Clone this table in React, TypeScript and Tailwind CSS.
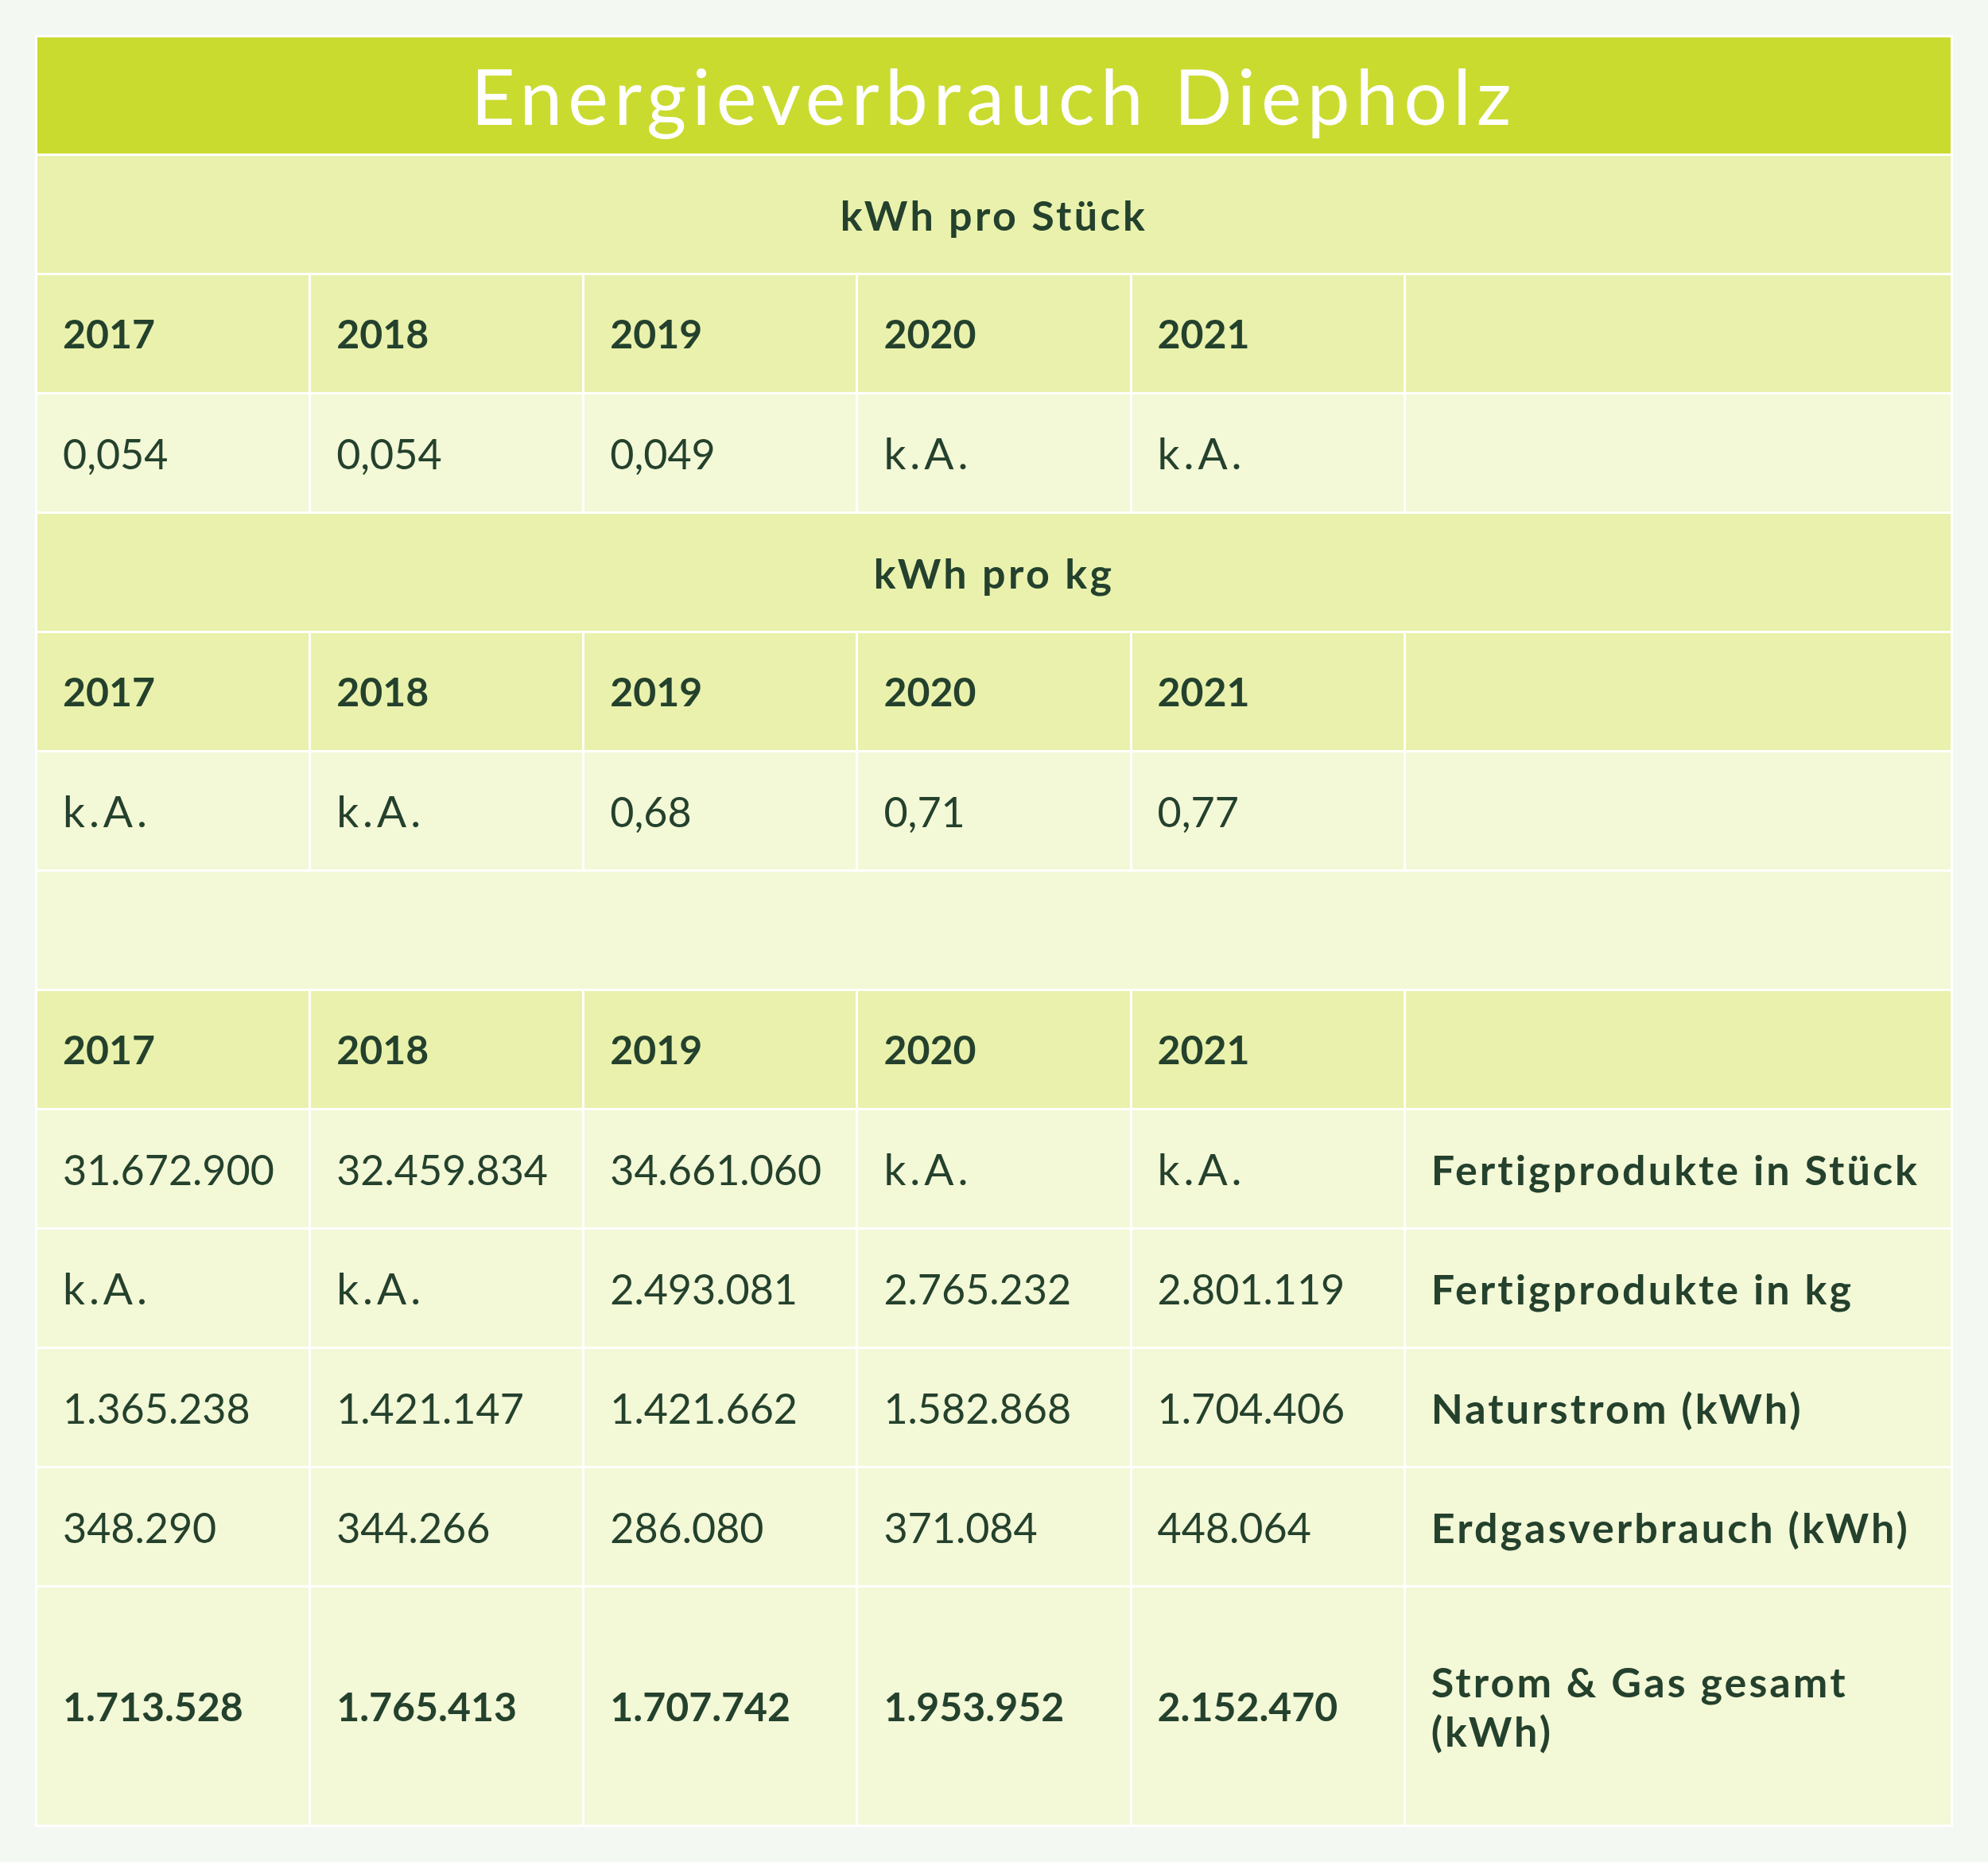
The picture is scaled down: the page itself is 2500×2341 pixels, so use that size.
import React from 'react';

// Energieverbrauch table, 7 grid units wide; the label column spans two units

const years = ['2017', '2018', '2019', '2020', '2021'];

function SectionHeader({ title }: { title: string }) {
  return (
    <div className="col-span-7 flex h-[147px] items-center justify-center bg-[#e9f1ac] text-[52px] font-bold tracking-[0.065em]">
      {title}
    </div>
  );
}

function YearRow() {
  return (
    <>
      {years.map((y) => (
        <div key={y} className="flex h-[147px] items-center bg-[#e9f1ac] pl-[32px] text-[50px] font-bold">
          {y}
        </div>
      ))}
      <div className="col-span-2 h-[147px] bg-[#e9f1ac]" />
    </>
  );
}

interface DataRowProps {
  values: string[];
  label?: string;
  bold?: boolean;
  tall?: boolean;
}

function DataRow({ values, label, bold, tall }: DataRowProps) {
  const h = tall ? 'h-[298px]' : 'h-[147px]';
  return (
    <>
      {values.map((v, i) => (
        <div
          key={i}
          className={`flex ${h} items-center bg-[#f3f8d6] pl-[32px] ${bold ? 'text-[50px] font-bold' : 'text-[52px] font-normal'} ${v === 'k.A.' ? 'text-[55px] tracking-[0.09em]' : ''}`}
        >
          {v}
        </div>
      ))}
      <div className={`col-span-2 flex ${h} items-center bg-[#f3f8d6] pl-[32px] pr-[30px] text-[52px] font-bold leading-[62px] tracking-[0.06em]`}>
        {label}
      </div>
    </>
  );
}

export default function App() {
  return (
    <div className="min-h-screen bg-[#f4f8f3] pt-[44px] pb-[44px]">
      <div className="mx-auto grid w-[2412px] grid-cols-7 gap-[3px] bg-white p-[3px] font-['Lato',sans-serif] text-[#24412d]">
        {/* Title */}
        <div className="col-span-7 flex h-[146px] items-center justify-center bg-[#cadb30] text-[96px] tracking-[0.075em] text-white">
          Energieverbrauch Diepholz
        </div>

        {/* kWh pro Stück */}
        <SectionHeader title="kWh pro Stück" />
        <YearRow />
        <DataRow values={['0,054', '0,054', '0,049', 'k.A.', 'k.A.']} />

        {/* kWh pro kg */}
        <SectionHeader title="kWh pro kg" />
        <YearRow />
        <DataRow values={['k.A.', 'k.A.', '0,68', '0,71', '0,77']} />

        {/* spacer row */}
        <div className="col-span-7 h-[147px] bg-[#f3f8d6]" />

        {/* Absolute Werte */}
        <YearRow />
        <DataRow values={['31.672.900', '32.459.834', '34.661.060', 'k.A.', 'k.A.']} label="Fertigprodukte in Stück" />
        <DataRow values={['k.A.', 'k.A.', '2.493.081', '2.765.232', '2.801.119']} label="Fertigprodukte in kg" />
        <DataRow values={['1.365.238', '1.421.147', '1.421.662', '1.582.868', '1.704.406']} label="Naturstrom (kWh)" />
        <DataRow values={['348.290', '344.266', '286.080', '371.084', '448.064']} label="Erdgasverbrauch (kWh)" />
        <DataRow
          values={['1.713.528', '1.765.413', '1.707.742', '1.953.952', '2.152.470']}
          label="Strom & Gas gesamt (kWh)"
          bold
          tall
        />
      </div>
    </div>
  );
}
